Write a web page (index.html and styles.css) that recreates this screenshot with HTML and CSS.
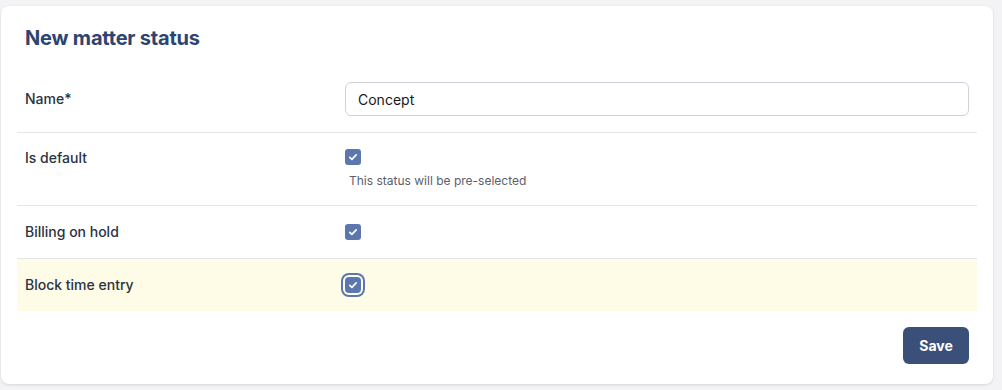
FILE: index.html
```html
<!DOCTYPE html>
<html>

	<head>
		<meta charset="UTF-8">
		<title>New matter status</title>
		<link rel="stylesheet" href="styles.css">
	</head>

	<body>
		<div class="card">
			<h1 class="title">New matter status</h1>

			<div class="row">
				<label class="label">Name*</label>
				<div class="control">
					<input type="text" class="text-input" value="Concept" />
				</div>
			</div>

			<div class="row row-top">
				<label class="label">Is default</label>
				<div class="control">
					<span class="check">
						<svg viewBox="0 0 16 16" width="16" height="16"><path d="M4.8 8.3l2.1 2 4.3-4.4" fill="none" stroke="#fff" stroke-width="1.7" stroke-linecap="round" stroke-linejoin="round"/></svg>
					</span>
					<p class="hint">This status will be pre-selected</p>
				</div>
			</div>

			<div class="row">
				<label class="label">Billing on hold</label>
				<div class="control">
					<span class="check">
						<svg viewBox="0 0 16 16" width="16" height="16"><path d="M4.8 8.3l2.1 2 4.3-4.4" fill="none" stroke="#fff" stroke-width="1.7" stroke-linecap="round" stroke-linejoin="round"/></svg>
					</span>
				</div>
			</div>

			<div class="row row-active">
				<label class="label">Block time entry</label>
				<div class="control">
					<span class="check check-focus">
						<svg viewBox="0 0 16 16" width="16" height="16"><path d="M4.8 8.3l2.1 2 4.3-4.4" fill="none" stroke="#fff" stroke-width="1.7" stroke-linecap="round" stroke-linejoin="round"/></svg>
					</span>
				</div>
			</div>

			<div class="actions">
				<button class="btn-save">Save</button>
			</div>
		</div>
	</body>

</html>
```

FILE: styles.css
```css
* {
	margin: 0;
	padding: 0;
	box-sizing: border-box;
}

html,
body {
	width: 100%;
	height: 100%;
}

body {
	background: #f3f3f5;
	font-family: Inter, "Liberation Sans", sans-serif;
	color: #2a3342;
	padding: 6px 9px 0 1px;
}

.card {
	background: #fff;
	border-radius: 8px;
	box-shadow: 0 1px 3px rgba(0, 0, 0, 0.12);
	padding: 16px 16px 20px;
	height: 378px;
}

.title {
	font-size: 20px;
	line-height: 28px;
	font-weight: 700;
	color: #2e4470;
	padding: 2px 8px 0;
	margin-bottom: 14px;
	letter-spacing: -0.2px;
}

.row {
	display: grid;
	grid-template-columns: 320px 1fr;
	align-items: center;
	padding: 16px 8px;
	border-top: 1px solid #e4e5ea;
}

.row:first-of-type {
	border-top: 0;
}

.row-top {
	align-items: start;
}

.row-active {
	background: #fefbe6;
}

.label {
	font-size: 14px;
	line-height: 18px;
	font-weight: 500;
	color: #2a3342;
}

.control {
	min-height: 20px;
	display: flex;
	flex-direction: column;
	justify-content: center;
	align-items: flex-start;
}

.text-input {
	width: 100%;
	height: 34px;
	border: 1px solid #cfd1d9;
	border-radius: 6px;
	padding: 0 12px;
	font-family: inherit;
	font-size: 14px;
	color: #15181e;
	outline: none;
}

.check {
	display: block;
	width: 16px;
	height: 16px;
	border-radius: 3px;
	background: #5b77ae;
}

.check svg {
	display: block;
}

.check-focus {
	box-shadow: 0 0 0 2px #fff, 0 0 0 4px #5b77ae;
	border-radius: 4px;
}

.hint {
	margin-top: 8px;
	padding-left: 4px;
	font-size: 12px;
	line-height: 16px;
	color: #5a606c;
}

.actions {
	display: flex;
	justify-content: flex-end;
	padding: 16px 8px 0;
}

.btn-save {
	width: 66px;
	height: 37px;
	border: 0;
	border-radius: 6px;
	background: #3a5078;
	color: #fff;
	font-family: inherit;
	font-size: 14px;
	font-weight: 700;
}
```
